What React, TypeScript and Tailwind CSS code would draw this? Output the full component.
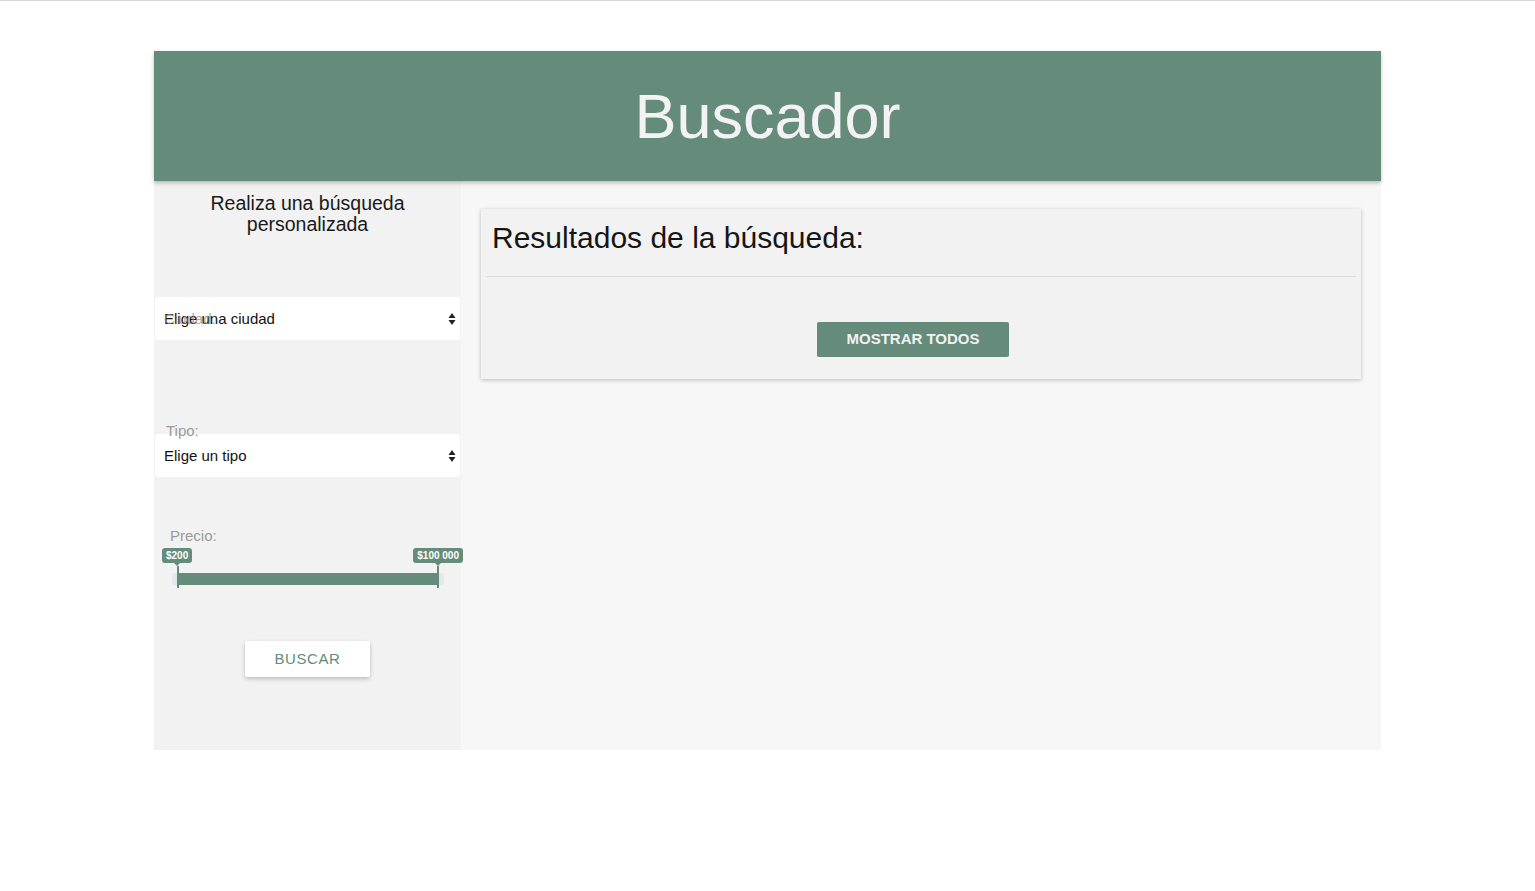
import React from "react";

const GREEN = "#658b7b";

function SelectBox({ text, overlay }: { text: string; overlay?: string }) {
  return (
    <div className="relative flex h-[43px] items-center justify-between rounded-[3px] bg-white pl-[9px] pr-[4px] pt-[2px] text-[15px] text-[#111]">
      <span>{text}</span>
      {overlay && (
        <span className="absolute inset-y-0 left-[9px] flex items-center pt-[2px] text-[15px] text-[#8c8c8c]/75">
          {overlay}
        </span>
      )}
      <svg width="10" height="16" viewBox="0 0 10 16" className="mr-[-1px] mt-[-2px]">
        <path d="M5 2 L8.5 7 H1.5 Z" fill="#222" />
        <path d="M5 14 L8.5 9 H1.5 Z" fill="#222" />
      </svg>
    </div>
  );
}

function Tip({ label }: { label: string }) {
  return (
    <div className="relative flex flex-col items-center">
      <div
        className="rounded-[3px] px-[4px] text-[10px] font-bold leading-[15px] text-white"
        style={{ backgroundColor: GREEN }}
      >
        {label}
      </div>
      <div
        className="h-0 w-0 border-x-[3px] border-t-[3px] border-x-transparent"
        style={{ borderTopColor: GREEN }}
      />
    </div>
  );
}

export default function App() {
  return (
    <div className="min-h-[891px] w-full border-t border-[#d4d4d4] bg-white font-['Liberation_Sans',Arial,sans-serif]">
      <div className="mx-auto w-[1227px] pt-[50px]">
        <header
          className="relative z-10 flex h-[130px] items-center justify-center shadow-[0_2px_4px_rgba(0,0,0,0.25)]"
          style={{ backgroundColor: GREEN }}
        >
          <h1 className="mt-[1px] text-[63px] leading-none text-[#f3f3f3]">Buscador</h1>
        </header>

        <div className="flex h-[569px]">
          <aside className="flex w-[307px] flex-col bg-[#f2f2f2] px-[1px]">
            <h2 className="mt-[12px] text-center text-[19.5px] leading-[21px] text-[#1a1a1a]">
              Realiza una búsqueda
              <br />
              personalizada
            </h2>

            <div className="mt-[62px]">
              <SelectBox text="Elige una ciudad" overlay="Ciudad:" />
            </div>

            <div className="relative mt-[94px]">
              <span className="absolute left-[11px] top-[-14px] z-10 text-[15px] text-[#9a9a9a]">
                Tipo:
              </span>
              <SelectBox text="Elige un tipo" />
            </div>

            <div className="mt-[51px] pl-[15px] pr-[16px]">
              <div className="pl-[0px] text-[15px] leading-[16px] text-[#9a9a9a]">Precio:</div>
              <div className="relative mt-[29px] h-[12px]">
                <div className="absolute left-[2px] right-0 top-0 h-[12px] rounded-[3px] bg-[#e4e6ea]" />
                <div
                  className="absolute left-[8px] right-[6px] top-0 h-[12px]"
                  style={{ backgroundColor: GREEN }}
                />
                <div className="absolute left-[7px] top-[-7px] h-[22px] w-[2px]" style={{ backgroundColor: GREEN }} />
                <div className="absolute right-[5px] top-[-7px] h-[22px] w-[2px]" style={{ backgroundColor: GREEN }} />
                <div className="absolute left-[-8px] top-[-25px]">
                  <Tip label="$200" />
                </div>
                <div className="absolute right-[-19px] top-[-25px]">
                  <Tip label="$100 000" />
                </div>
              </div>
            </div>

            <div className="mt-[56px] flex justify-center">
              <button
                type="button"
                className="h-[36px] w-[125px] rounded-[2px] bg-white text-[15px] tracking-[0.6px] shadow-[0_2px_4px_rgba(0,0,0,0.22)]"
                style={{ color: GREEN }}
              >
                BUSCAR
              </button>
            </div>
          </aside>

          <main className="flex-1 bg-[#f7f7f7] px-[20px] pt-[28px]">
            <section className="h-[170px] bg-[#f2f2f2] px-[5px] shadow-[0_1px_4px_rgba(0,0,0,0.25)]">
              <h3 className="pl-[6px] pt-[13px] text-[30px] leading-[32px] text-[#151515]">
                Resultados de la búsqueda:
              </h3>
              <div className="mt-[22px] h-px bg-[#dcdcdc]" />
              <div className="mt-[45px] flex justify-center pr-[16px]">
                <button
                  type="button"
                  className="h-[35px] w-[192px] rounded-[2px] text-[15px] font-bold text-[#f1f1f1]"
                  style={{ backgroundColor: GREEN }}
                >
                  MOSTRAR TODOS
                </button>
              </div>
            </section>
          </main>
        </div>
      </div>
    </div>
  );
}
